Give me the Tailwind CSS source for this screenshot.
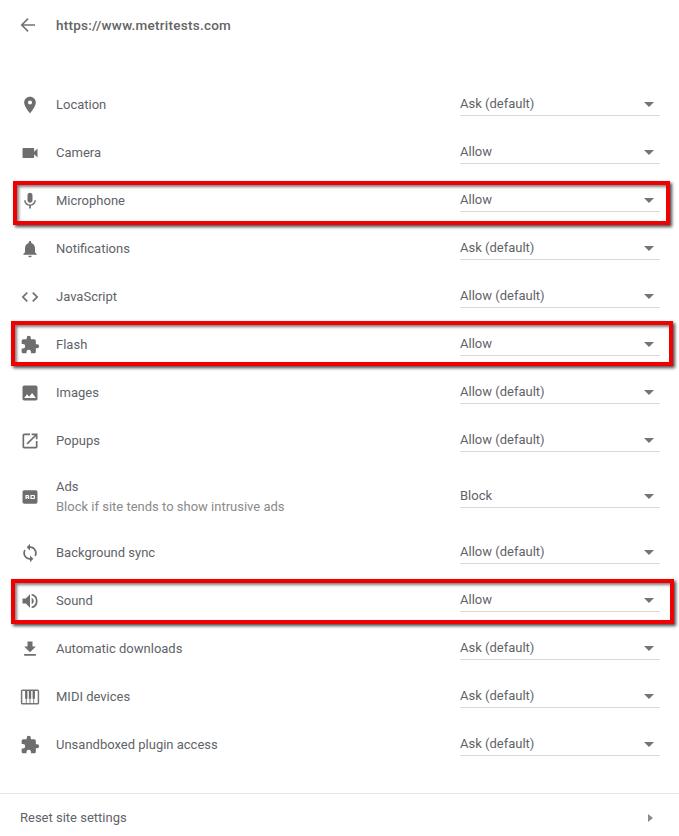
<!DOCTYPE html>
<html><head><meta charset="utf-8"><script src="https://cdn.jsdelivr.net/npm/@tailwindcss/browser@4"></script></head>
<body class="bg-white">
<div class="relative w-[679px] h-[836px] overflow-hidden font-['Roboto',sans-serif] text-[13px] text-[#5f6368]">
<header class="flex items-center h-[50px] pl-[20px]">
<svg class="w-4 h-4 mr-[20px] fill-[#737373]" viewBox="0 0 16 16"><path d="M15 7.200H3.600l5-5L7.500 1 .6 8l6.900 7 1.100-1.200-5-5H15z"/></svg>
<span class="font-medium text-[13.5px] text-[#646464] tracking-[0.25px]">https://www.metritests.com</span></header>
<div class="pt-[30px]">

<div class="flex items-center h-12 pt-[2px] pl-[20px] pr-[19px]"><svg class="w-5 h-5 mr-[16px] fill-[#6e6e6e]" viewBox="0 0 24 24"><path d="M12 2C8.100 2 5 5.100 5 9c0 5.200 7 13 7 13s7-7.800 7-13c0-3.900-3.100-7-7-7zm0 9.500a2.500 2.500 0 1 1 0-5 2.500 2.500 0 0 1 0 5z"/></svg><span class="flex-1">Location</span><div class="relative mb-[2px] w-[200px] h-[24px] border-b border-[#dadada] pt-[4px] leading-[16px]">Ask (default)<span class="absolute right-[6px] top-[10px] w-0 h-0 border-x-[5px] border-x-transparent border-t-[5px] border-t-[#737373]"></span></div></div>

<div class="flex items-center h-12 pt-[2px] pl-[20px] pr-[19px]"><svg class="w-5 h-5 mr-[16px] fill-[#6e6e6e]" viewBox="0 0 24 24"><path d="M17 10.500V7c0-.6-.4-1-1-1H4c-.6 0-1 .4-1 1v10c0 .6.400 1 1 1h12c.6 0 1-.4 1-1v-3.500l4 4v-11z"/></svg><span class="flex-1">Camera</span><div class="relative mb-[2px] w-[200px] h-[24px] border-b border-[#dadada] pt-[4px] leading-[16px]">Allow<span class="absolute right-[6px] top-[10px] w-0 h-0 border-x-[5px] border-x-transparent border-t-[5px] border-t-[#737373]"></span></div></div>

<div class="flex items-center h-12 pt-[2px] pl-[20px] pr-[19px]"><svg class="w-5 h-5 mr-[16px] fill-[#6e6e6e]" viewBox="0 0 24 24"><path d="M12 14c1.700 0 3-1.300 3-3V5c0-1.700-1.300-3-3-3S9 3.300 9 5v6c0 1.700 1.300 3 3 3zm5.300-3c0 3-2.500 5.100-5.300 5.100S6.700 14 6.700 11H5c0 3.400 2.700 6.200 6 6.700V21h2v-3.300c3.300-.5 6-3.300 6-6.700z"/></svg><span class="flex-1">Microphone</span><div class="relative mb-[2px] w-[200px] h-[24px] border-b border-[#dadada] pt-[4px] leading-[16px]">Allow<span class="absolute right-[6px] top-[10px] w-0 h-0 border-x-[5px] border-x-transparent border-t-[5px] border-t-[#737373]"></span></div></div>

<div class="flex items-center h-12 pt-[2px] pl-[20px] pr-[19px]"><svg class="w-5 h-5 mr-[16px] fill-[#6e6e6e]" viewBox="0 0 24 24"><path d="M12 22c1.100 0 2-.9 2-2h-4c0 1.100.9 2 2 2zm6-6v-5c0-3.100-1.600-5.600-4.500-6.300V4c0-.8-.7-1.500-1.500-1.500s-1.500.7-1.500 1.500v.7C7.600 5.400 6 7.900 6 11v5l-2 2v1h16v-1z"/></svg><span class="flex-1">Notifications</span><div class="relative mb-[2px] w-[200px] h-[24px] border-b border-[#dadada] pt-[4px] leading-[16px]">Ask (default)<span class="absolute right-[6px] top-[10px] w-0 h-0 border-x-[5px] border-x-transparent border-t-[5px] border-t-[#737373]"></span></div></div>

<div class="flex items-center h-12 pt-[2px] pl-[20px] pr-[19px]"><svg class="w-5 h-5 mr-[16px] fill-[#6e6e6e]" viewBox="0 0 24 24"><path d="M9.400 16.600 4.800 12l4.600-4.600L8 6l-6 6 6 6zm5.200 0 4.600-4.600-4.600-4.600L16 6l6 6-6 6z"/></svg><span class="flex-1">JavaScript</span><div class="relative mb-[2px] w-[200px] h-[24px] border-b border-[#dadada] pt-[4px] leading-[16px]">Allow (default)<span class="absolute right-[6px] top-[10px] w-0 h-0 border-x-[5px] border-x-transparent border-t-[5px] border-t-[#737373]"></span></div></div>

<div class="flex items-center h-12 pt-[2px] pl-[20px] pr-[19px]"><svg class="w-5 h-5 mr-[16px] fill-[#6e6e6e]" viewBox="0 0 24 24"><path d="M20.500 11H19V7c0-1.100-.9-2-2-2h-4V3.500a2.500 2.500 0 0 0-5 0V5H4c-1.100 0-2 .9-2 2v3.800h1.500a2.700 2.700 0 0 1 0 5.400H2V20c0 1.100.9 2 2 2h3.800v-1.500a2.700 2.700 0 0 1 5.400 0V22H17c1.100 0 2-.9 2-2v-4h1.500a2.500 2.500 0 0 0 0-5z"/></svg><span class="flex-1">Flash</span><div class="relative mb-[2px] w-[200px] h-[24px] border-b border-[#dadada] pt-[4px] leading-[16px]">Allow<span class="absolute right-[6px] top-[10px] w-0 h-0 border-x-[5px] border-x-transparent border-t-[5px] border-t-[#737373]"></span></div></div>

<div class="flex items-center h-12 pt-[2px] pl-[20px] pr-[19px]"><svg class="w-5 h-5 mr-[16px] fill-[#6e6e6e]" viewBox="0 0 24 24"><path d="M21 19V5c0-1.100-.9-2-2-2H5c-1.100 0-2 .9-2 2v14c0 1.100.9 2 2 2h14c1.100 0 2-.9 2-2zM8.500 13.500l2.500 3 3.500-4.500 4.500 6H5z"/></svg><span class="flex-1">Images</span><div class="relative mb-[2px] w-[200px] h-[24px] border-b border-[#dadada] pt-[4px] leading-[16px]">Allow (default)<span class="absolute right-[6px] top-[10px] w-0 h-0 border-x-[5px] border-x-transparent border-t-[5px] border-t-[#737373]"></span></div></div>

<div class="flex items-center h-12 pt-[2px] pl-[20px] pr-[19px]"><svg class="w-5 h-5 mr-[16px] fill-[#6e6e6e]" viewBox="0 0 24 24"><path d="M19 19H5V5h7V3H5a2 2 0 0 0-2 2v14c0 1.100.9 2 2 2h14c1.100 0 2-.9 2-2v-7h-2zM14 3v2h3.600l-9.800 9.800 1.400 1.400L19 6.400V10h2V3z"/></svg><span class="flex-1">Popups</span><div class="relative mb-[2px] w-[200px] h-[24px] border-b border-[#dadada] pt-[4px] leading-[16px]">Allow (default)<span class="absolute right-[6px] top-[10px] w-0 h-0 border-x-[5px] border-x-transparent border-t-[5px] border-t-[#737373]"></span></div></div>

<div class="flex items-center h-16 pt-[2px] pl-[20px] pr-[19px]"><svg class="w-5 h-5 mr-[16px]" viewBox="0 0 24 24"><path class="fill-[#6e6e6e]" fill-rule="evenodd" d="M5 4h14a2 2 0 0 1 2 2v12a2 2 0 0 1-2 2H5a2 2 0 0 1-2-2V6a2 2 0 0 1 2-2zm1.500 5.500v5H8v-1.500h1.500v1.500H11v-4l-1-1zM8 10.800h1.500v1H8zm4.500-1.300v5H17l1-1v-3l-1-1zm1.500 1.300h2.500v2.400H14z"/></svg><div class="flex-1 leading-[20px]"><div>Ads</div><div class="text-[#8a8a8a]">Block if site tends to show intrusive ads</div></div><div class="relative mb-[2px] w-[200px] h-[24px] border-b border-[#dadada] pt-[4px] leading-[16px]">Block<span class="absolute right-[6px] top-[10px] w-0 h-0 border-x-[5px] border-x-transparent border-t-[5px] border-t-[#737373]"></span></div></div>

<div class="flex items-center h-12 pt-[2px] pl-[20px] pr-[19px]"><svg class="w-5 h-5 mr-[16px] fill-[#6e6e6e]" viewBox="0 0 24 24"><path d="M12 4V1L8 5l4 4V6c3.300 0 6 2.700 6 6 0 1-.3 2-.7 2.800l1.500 1.500A8 8 0 0 0 12 4zm0 14c-3.300 0-6-2.700-6-6 0-1 .3-2 .7-2.800L5.200 7.700A8 8 0 0 0 12 20v3l4-4-4-4z"/></svg><span class="flex-1">Background sync</span><div class="relative mb-[2px] w-[200px] h-[24px] border-b border-[#dadada] pt-[4px] leading-[16px]">Allow (default)<span class="absolute right-[6px] top-[10px] w-0 h-0 border-x-[5px] border-x-transparent border-t-[5px] border-t-[#737373]"></span></div></div>

<div class="flex items-center h-12 pt-[2px] pl-[20px] pr-[19px]"><svg class="w-5 h-5 mr-[16px] fill-[#6e6e6e]" viewBox="0 0 24 24"><path d="M3 9v6h4l5 5V4L7 9zm13.500 3A4.500 4.500 0 0 0 14 8v8a4.500 4.500 0 0 0 2.500-4zM14 3.200v2.100a7 7 0 0 1 0 13.400v2.100a9 9 0 0 0 0-17.600z"/></svg><span class="flex-1">Sound</span><div class="relative mb-[2px] w-[200px] h-[24px] border-b border-[#dadada] pt-[4px] leading-[16px]">Allow<span class="absolute right-[6px] top-[10px] w-0 h-0 border-x-[5px] border-x-transparent border-t-[5px] border-t-[#737373]"></span></div></div>

<div class="flex items-center h-12 pt-[2px] pl-[20px] pr-[19px]"><svg class="w-5 h-5 mr-[16px] fill-[#6e6e6e]" viewBox="0 0 24 24"><path d="M19 9h-4V3H9v6H5l7 7zM5 18v2h14v-2z"/></svg><span class="flex-1">Automatic downloads</span><div class="relative mb-[2px] w-[200px] h-[24px] border-b border-[#dadada] pt-[4px] leading-[16px]">Ask (default)<span class="absolute right-[6px] top-[10px] w-0 h-0 border-x-[5px] border-x-transparent border-t-[5px] border-t-[#737373]"></span></div></div>

<div class="flex items-center h-12 pt-[2px] pl-[20px] pr-[19px]"><svg class="w-5 h-5 mr-[16px]" viewBox="0 0 24 24"><rect class="fill-none stroke-[#777777]" x="1.900" y="3.900" width="20.200" height="16.200" rx="1" stroke-width="1.800"/><path class="fill-[#6e6e6e]" d="M6.100 4h2.800v10H6.100zm4.500 0h2.800v10h-2.800zm4.500 0h2.800v10h-2.800zM7 14h1v6H7zm4.500 0h1v6h-1zm4.500 0h1v6h-1z"/></svg><span class="flex-1">MIDI devices</span><div class="relative mb-[2px] w-[200px] h-[24px] border-b border-[#dadada] pt-[4px] leading-[16px]">Ask (default)<span class="absolute right-[6px] top-[10px] w-0 h-0 border-x-[5px] border-x-transparent border-t-[5px] border-t-[#737373]"></span></div></div>

<div class="flex items-center h-12 pt-[2px] pl-[20px] pr-[19px]"><svg class="w-5 h-5 mr-[16px] fill-[#6e6e6e]" viewBox="0 0 24 24"><path d="M20.500 11H19V7c0-1.100-.9-2-2-2h-4V3.500a2.500 2.500 0 0 0-5 0V5H4c-1.100 0-2 .9-2 2v3.800h1.500a2.700 2.700 0 0 1 0 5.400H2V20c0 1.100.9 2 2 2h3.800v-1.500a2.700 2.700 0 0 1 5.400 0V22H17c1.100 0 2-.9 2-2v-4h1.500a2.500 2.500 0 0 0 0-5z"/></svg><span class="flex-1">Unsandboxed plugin access</span><div class="relative mb-[2px] w-[200px] h-[24px] border-b border-[#dadada] pt-[4px] leading-[16px]">Ask (default)<span class="absolute right-[6px] top-[10px] w-0 h-0 border-x-[5px] border-x-transparent border-t-[5px] border-t-[#737373]"></span></div></div>
</div>
<div class="mt-[25px] border-t border-[#e6e6e6] flex items-center justify-between h-[48px] pl-[20px] pr-[26px]"><span>Reset site settings</span><span class="w-0 h-0 border-y-[4px] border-y-transparent border-l-[5px] border-l-[#8c8c8c]"></span></div>

<div class="absolute left-[13px] top-[181px] w-[657px] h-[44px] border-[4px] border-[#f00000] shadow-[2px_2px_3px_rgba(0,0,0,0.7),inset_2px_2px_3px_rgba(0,0,0,0.5)]"></div>
<div class="absolute left-[11px] top-[321px] w-[662px] h-[45px] border-[4px] border-[#f00000] shadow-[2px_2px_3px_rgba(0,0,0,0.7),inset_2px_2px_3px_rgba(0,0,0,0.5)]"></div>
<div class="absolute left-[11px] top-[579px] w-[663px] h-[45px] border-[4px] border-[#f00000] shadow-[2px_2px_3px_rgba(0,0,0,0.7),inset_2px_2px_3px_rgba(0,0,0,0.5)]"></div>
</div>
</body></html>
